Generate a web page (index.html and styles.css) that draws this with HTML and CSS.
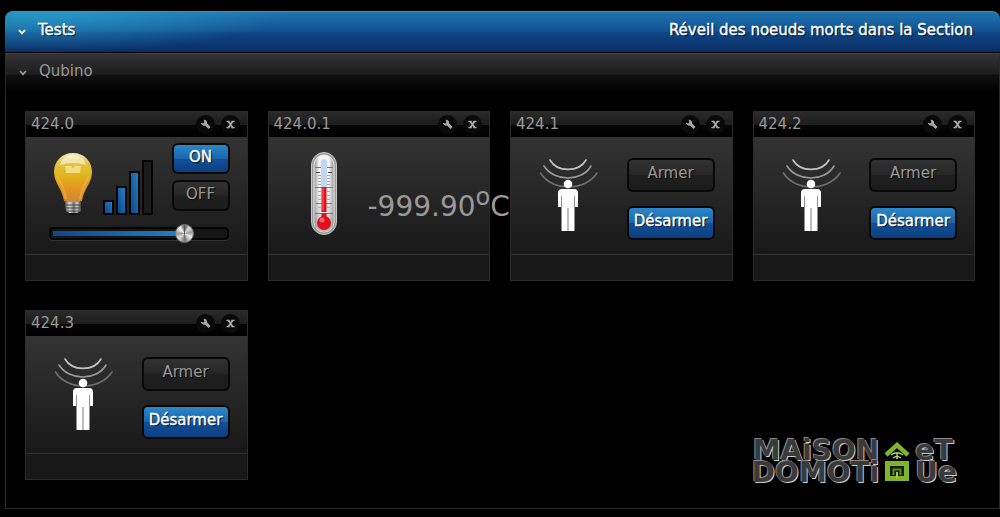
FILE: index.html
```html
<!DOCTYPE html>
<html lang="fr">
<head>
  <meta charset="UTF-8">
  <meta name="viewport" content="width=device-width, initial-scale=1.0">
  <title>Tests</title>
  <link rel="stylesheet" href="styles.css">
</head>
<body>
<!-- shared icons -->
<svg class="sprite" aria-hidden="true">
  <symbol id="chevron" viewBox="0 0 8 6">
    <path d="M1 1 L4 4.4 L7 1" fill="none" stroke="currentColor" stroke-width="1.7"/>
  </symbol>
  <symbol id="wrench" viewBox="0 0 12 12">
    <path d="M1 4.2 L3.6 4.8 L4.8 3.6 L4 1 C6.2 .6 8 2.4 7.6 4.6 L11.4 8.8 L9.4 11 L5.4 7 C3.4 7.800 1 6.400 1 4.200 Z" fill="currentColor"/>
  </symbol>
  <symbol id="close" viewBox="0 0 10 10">
    <path d="M.5 1.5 H4 M6 1.5 H9.500 M.5 8.5 H4 M6 8.5 H9.500" stroke="currentColor" stroke-width="1.400"/>
    <path d="M2.5 1.5 L7.5 8.5 M7.5 1.5 L2.5 8.5" stroke="currentColor" stroke-width="2"/>
  </symbol>
  <symbol id="person" viewBox="0 0 60 74">
    <g fill="none" stroke-width="1.6" stroke-linecap="round">
      <path d="M11 2 C18 14.500 40 14.500 47 2" stroke="#c4c4c4"/>
      <path d="M5 8 C15 24 43 24 52 8" stroke="#9a9a9a"/>
      <path d="M1.500 15 C13 33.500 46 33.500 58 15" stroke="#707070"/>
    </g>
    <circle cx="29" cy="26" r="4.300" fill="#fff"/>
    <path d="M23 31 H35 Q39 31 39 35 V49 H36 V38 H35.500 V73 H29.300 V50 H28.700 V73 H22.500 V38 H22 V49 H19 V35 Q19 31 23 31 Z" fill="#fff"/>
  </symbol>
</svg>

<main class="section">
  <header class="section-header">
    <button class="toggle"><svg width="8" height="6"><use href="#chevron"/></svg>Tests</button>
    <a href="#">Réveil des noeuds morts dans la Section</a>
  </header>

  <div class="room">
    <h2><button class="toggle"><svg width="8" height="6"><use href="#chevron"/></svg>Qubino</button></h2>

    <div class="devices">
      <article class="card">
        <div class="card-header">
          <h3>424.0</h3>
          <button class="tool" aria-label="Configurer"><svg width="11" height="11"><use href="#wrench"/></svg></button>
          <button class="tool" aria-label="Supprimer"><svg width="9" height="9"><use href="#close"/></svg></button>
        </div>
        <div class="card-body dimmer">
          <div class="dimmer-row">
            <svg class="bulb" width="40" height="63" viewBox="0 0 40 63">
              <defs>
                <linearGradient id="glass" x1="0" y1="0" x2="0" y2="1">
                  <stop offset="0" stop-color="#f6edc0"/>
                  <stop offset=".2" stop-color="#e2c348"/>
                  <stop offset=".45" stop-color="#e0b41c"/>
                  <stop offset=".75" stop-color="#e29220"/>
                  <stop offset="1" stop-color="#c98a3a"/>
                </linearGradient>
                <linearGradient id="metal">
                  <stop offset="0" stop-color="#666"/>
                  <stop offset=".3" stop-color="#ddd"/>
                  <stop offset=".55" stop-color="#777"/>
                  <stop offset=".75" stop-color="#ccc"/>
                  <stop offset="1" stop-color="#444"/>
                </linearGradient>
              </defs>
              <path d="M20 1 C9 1 1 9 1 20 C1 31 9 36 11 49 Q20 52 29 49 C31 36 39 31 39 20 C39 9 31 1 20 1 Z" fill="url(#glass)"/>
              <path d="M7 13 Q9 4 20 3 Q31 4 33 13 Q20 9 7 13 Z" fill="#fff" opacity=".5"/>
              <path d="M12 14 H18 L20 16 L22 14 H28 L27 21 H13 Z" fill="#fff3b8" opacity=".6"/>
              <path d="M4 24 Q11 36 13 47 M36 24 Q29 36 27 47" fill="none" stroke="#f9c66a" stroke-width="2" opacity=".4"/>
              <path d="M12 50 H28 V59 Q20 64 13 59 Z" fill="url(#metal)"/>
              <path d="M12 53 H28 M12 56 H28 M13 59 H27" stroke="#444" stroke-width="1"/>
              <path d="M15 61 H25 L23 63 H17 Z" fill="#151515"/>
            </svg>
            <div class="level">
              <span class="bar bar-1 on"></span>
              <span class="bar bar-2 on"></span>
              <span class="bar bar-3 on"></span>
              <span class="bar bar-4"></span>
            </div>
            <div class="buttons">
              <button class="btn active">ON</button>
              <button class="btn">OFF</button>
            </div>
          </div>
          <input type="range" min="0" max="100" value="78" aria-label="Intensité">
        </div>
        <div class="card-footer"></div>
      </article>

      <article class="card">
        <div class="card-header">
          <h3>424.0.1</h3>
          <button class="tool" aria-label="Configurer"><svg width="11" height="11"><use href="#wrench"/></svg></button>
          <button class="tool" aria-label="Supprimer"><svg width="9" height="9"><use href="#close"/></svg></button>
        </div>
        <div class="card-body temperature">
          <svg width="26" height="84" viewBox="0 0 26 84">
            <defs>
              <linearGradient id="tube">
                <stop offset="0" stop-color="#8d8d8d"/>
                <stop offset=".25" stop-color="#f4f4f4"/>
                <stop offset=".75" stop-color="#f4f4f4"/>
                <stop offset="1" stop-color="#8d8d8d"/>
              </linearGradient>
              <linearGradient id="shade" x1="0" y1="0" x2="0" y2="1">
                <stop offset=".3" stop-color="#fff" stop-opacity="0"/>
                <stop offset="1" stop-color="#888" stop-opacity=".6"/>
              </linearGradient>
            </defs>
            <rect x=".5" y=".5" width="25" height="82" rx="12.500" fill="#999" stroke="#c8c8c8"/>
            <rect x="3" y="3" width="20" height="77" rx="10" fill="url(#tube)" stroke="#eee"/>
            <rect x="3" y="3" width="20" height="77" rx="10" fill="url(#shade)"/>
            <path d="M4 15.500 H22 M4 35.500 H22 M5 51.500 H21 M4 61.500 H22" stroke="#777"/>
            <path d="M5 20.500 H9 M17 20.500 H21" stroke="#444"/>
            <path d="M7 23.500 H10 M7 26.500 H10 M7 29.500 H10 M7 32.500 H10 M7 39.500 H10 M7 43.500 H10 M7 47.500 H10 M7 55.500 H10 M16 23.500 H19 M16 26.500 H19 M16 29.500 H19 M16 32.500 H19 M16 39.500 H19 M16 43.500 H19 M16 47.500 H19 M16 55.500 H19" stroke="#aaa"/>
            <rect x="10" y="7" width="6" height="29" rx="3" fill="#c3d5f2"/>
            <rect x="10.500" y="35" width="5" height="30" fill="#e01320"/>
            <path d="M12 36 V58" stroke="#f66"/>
            <circle cx="13" cy="71" r="7" fill="#e30f1d"/>
            <circle cx="11" cy="68" r="2.500" fill="#f5606a"/>
            <path d="M9 60.500 H17" stroke="#fff"/>
          </svg>
          <span>-999.90<sup>o</sup>C</span>
        </div>
        <div class="card-footer"></div>
      </article>

      <article class="card">
        <div class="card-header">
          <h3>424.1</h3>
          <button class="tool" aria-label="Configurer"><svg width="11" height="11"><use href="#wrench"/></svg></button>
          <button class="tool" aria-label="Supprimer"><svg width="9" height="9"><use href="#close"/></svg></button>
        </div>
        <div class="card-body sensor">
          <svg width="60" height="74"><use href="#person"/></svg>
          <div class="buttons">
            <button class="btn">Armer</button>
            <button class="btn active">Désarmer</button>
          </div>
        </div>
        <div class="card-footer"></div>
      </article>

      <article class="card">
        <div class="card-header">
          <h3>424.2</h3>
          <button class="tool" aria-label="Configurer"><svg width="11" height="11"><use href="#wrench"/></svg></button>
          <button class="tool" aria-label="Supprimer"><svg width="9" height="9"><use href="#close"/></svg></button>
        </div>
        <div class="card-body sensor">
          <svg width="60" height="74"><use href="#person"/></svg>
          <div class="buttons">
            <button class="btn">Armer</button>
            <button class="btn active">Désarmer</button>
          </div>
        </div>
        <div class="card-footer"></div>
      </article>

      <article class="card">
        <div class="card-header">
          <h3>424.3</h3>
          <button class="tool" aria-label="Configurer"><svg width="11" height="11"><use href="#wrench"/></svg></button>
          <button class="tool" aria-label="Supprimer"><svg width="9" height="9"><use href="#close"/></svg></button>
        </div>
        <div class="card-body sensor">
          <svg width="60" height="74"><use href="#person"/></svg>
          <div class="buttons">
            <button class="btn">Armer</button>
            <button class="btn active">Désarmer</button>
          </div>
        </div>
        <div class="card-footer"></div>
      </article>
    </div>

    <div class="logo">
      <div class="words left"><span>MAiSON</span><span>DOMOTi</span></div>
      <svg width="26" height="42" viewBox="0 0 26 42">
        <path d="M2 15 L13 5 L24 15" fill="none" stroke="#7fb52c" stroke-width="4.500"/>
        <path d="M7 15 Q13 10.500 19 15 M9 18 Q13 15 17 18 M13 13 V19" fill="none" stroke="#a9cf6a" stroke-width="1.500"/>
        <path d="M3.500 23.500 H22.500 V38.500 H3.500 Z" fill="#141f05" stroke="#7fb52c" stroke-width="5"/>
        <path d="M9.500 35 V29.500 H16.500 V35" fill="none" stroke="#5d8a1d" stroke-width="2"/>
        <path d="M13 32 V38" stroke="#9ccc4a" stroke-width="2"/>
      </svg>
      <div class="words"><span>eT</span><span>Ue</span></div>
    </div>
  </div>
</main>
</body>
</html>
```
FILE: styles.css
```css
* {
  box-sizing: border-box;
}
body {
  margin: 0;
  padding: 11px 0 8px 5px;
  background: #000;
  color: #999;
  font-family: "DejaVu Sans", Verdana, sans-serif;
  font-size: 15px;
}
button {
  font: inherit;
  color: inherit;
  cursor: pointer;
}
h2, h3 {
  margin: 0;
  font-size: 15px;
  font-weight: normal;
}
.sprite {
  display: none;
}

/* section */
.section-header {
  display: flex;
  justify-content: space-between;
  align-items: center;
  height: 41px;
  padding: 0 27px 5px 13px;
  border-top: 1px solid #3a97bd;
  border-radius: 8px 8px 0 0;
  background:
    radial-gradient(ellipse 240px 40px at 40px 0, rgba(42, 165, 205, 0.75), transparent),
    linear-gradient(#1f74b0, #125090 50%, #0e4684 51%, #0b2d66);
  color: #fff;
  text-shadow: 1px 1px 1px #000;
  -webkit-text-stroke: 0.4px #fff;
}
.section-header a {
  color: #fff;
  text-decoration: none;
}
.toggle {
  display: flex;
  align-items: center;
  gap: 12px;
  padding: 0;
  border: 0;
  background: none;
  text-shadow: inherit;
}
.toggle svg {
  position: relative;
  top: 2px;
}
.room {
  margin-top: 1px;
  padding: 0 24px 28px 19px;
  border: 1px solid #2a2a2a;
  border-top-color: #444;
  background: linear-gradient(#333, #1e1e1e 20px, #101010 21px, #000 38px) no-repeat;
}
.room h2 {
  display: flex;
  align-items: center;
  height: 34px;
  margin-left: -6px;
}

/* cards */
.devices {
  display: grid;
  grid-template-columns: repeat(4, minmax(0, 1fr));
  gap: 29px 20px;
  margin-top: 23px;
}
.card {
  position: relative;
  border: 1px solid #2c2c2c;
  background: linear-gradient(#333 26px, #181818 144px);
}
.card-header {
  display: flex;
  align-items: center;
  gap: 6px;
  height: 25px;
  padding: 0 7px 0 5px;
  background: linear-gradient(#2a2a2a, #1d1d1d 50%, #050505 51%, #000);
}
.card-header h3 {
  flex: 1;
  padding-bottom: 2px;
}
.tool {
  display: flex;
  align-items: center;
  justify-content: center;
  width: 19px;
  height: 19px;
  padding: 0;
  border: 0;
  border-radius: 50%;
  background: #0a0a0a;
  color: #aaa;
}
.card-body {
  display: flex;
  height: 118px;
  border-bottom: 1px solid #333;
}
.card-footer {
  height: 25px;
}

/* buttons */
.buttons {
  display: flex;
  flex-direction: column;
}
.btn {
  padding: 0 0 4px;
  border: 2px solid #080808;
  border-radius: 6px;
  background: linear-gradient(#323232, #262626 50%, #202020 51%, #1c1c1c);
  text-shadow: 1px 1px 1px #000;
}
.btn.active {
  background: linear-gradient(#2b87c9, #1a66ab 50%, #12509a 51%, #0d3f80);
  color: #fff;
  -webkit-text-stroke: 0.4px #fff;
}

/* dimmer */
.dimmer {
  flex-direction: column;
  padding: 6px 17px 0 23px;
}
.dimmer-row {
  display: flex;
  align-items: flex-start;
}
.bulb {
  margin: 9px 10px 0 4px;
}
.level {
  display: flex;
  align-items: flex-end;
  gap: 2px;
  height: 72px;
}
.bar {
  width: 11px;
  border: 2px solid #050505;
  background: #1c1c1c;
}
.bar.on {
  background: linear-gradient(to top right, #10468c, #2480c4);
}
.bar-1 {
  height: 15px;
}
.bar-2 {
  height: 29px;
}
.bar-3 {
  height: 44px;
}
.bar-4 {
  height: 55px;
}
.dimmer .buttons {
  gap: 6px;
  width: 58px;
  margin-left: auto;
}
.dimmer .btn {
  height: 31px;
}
input[type="range"] {
  -webkit-appearance: none;
  appearance: none;
  width: 180px;
  height: 13px;
  margin: 12px 0 0;
  border-radius: 4px;
  background:
    linear-gradient(to right, #10468c, #2480c4) 4px 4px / 130px 5px no-repeat,
    #161616;
  box-shadow: inset 0 0 0 2px #050505, 0 1px 0 #333;
}
input[type="range"]::-webkit-slider-thumb {
  -webkit-appearance: none;
  width: 19px;
  height: 19px;
  border: 1px solid #777;
  border-radius: 50%;
  background: conic-gradient(#555, #ddd 40deg, #999 80deg, #eee 120deg, #777 180deg, #ddd 230deg, #999 270deg, #fff 320deg, #555);
}

/* temperature */
.temperature {
  align-items: flex-start;
  gap: 31px;
  padding: 15px 0 0 42px;
}
.temperature svg {
  flex: none;
}
.temperature span {
  margin-top: 38px;
  font-size: 28px;
  line-height: 34px;
  white-space: nowrap;
}
.temperature sup {
  font-size: 24px;
  line-height: 0;
  vertical-align: 11px;
}

/* presence sensor */
.sensor {
  justify-content: space-between;
  align-items: flex-start;
  padding: 21px 17px 0 28px;
}
.sensor .buttons {
  gap: 14px;
  width: 88px;
}
.sensor .btn {
  height: 34px;
}

/* logo */
.logo {
  position: absolute;
  right: 43px;
  bottom: 33px;
  display: flex;
  gap: 5px;
  color: #3a3a3a;
  font-size: 28px;
  font-weight: bold;
  line-height: 22px;
  text-shadow: 1px 1px 0 #ccc, -1px -1px 0 #888;
}
.words {
  display: flex;
  flex-direction: column;
}
.left {
  align-items: flex-end;
}
```
